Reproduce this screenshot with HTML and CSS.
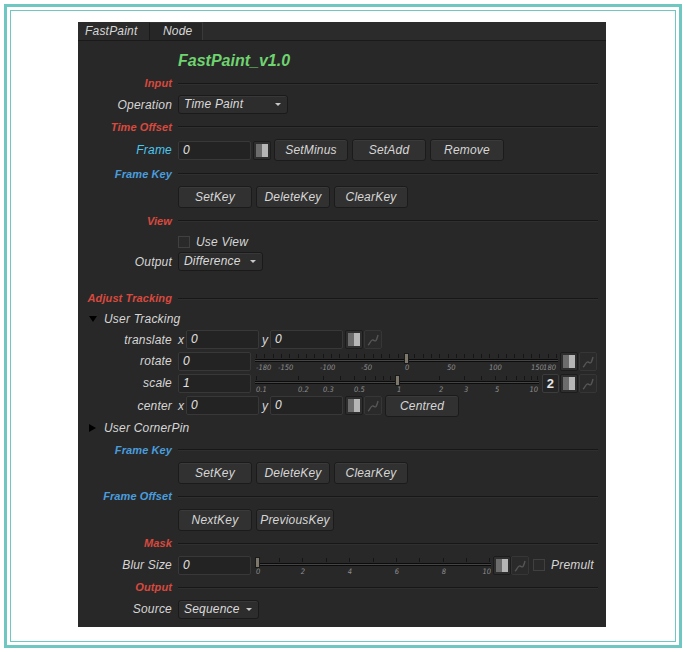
FILE: index.html
```html
<!DOCTYPE html>
<html>
<head>
<meta charset="utf-8">
<link rel="stylesheet" href="styles.css">
</head>
<body>
<div class="frame"><div class="frame-inner">
<div class="panel">
  <div class="tabs">
    <div class="tab active">FastPaint</div>
    <div class="tab node">Node</div>
  </div>
  <div class="body">
    <div class="row h31 top"><div class="lbl"></div><div class="ctl"><span class="title">FastPaint_v1.0</span></div></div>

    <div class="row h22"><div class="lbl hdr red">Input</div><div class="sep"></div></div>
    <div class="row h21"><div class="lbl">Operation</div><div class="ctl"><div class="dd w110">Time Paint</div></div></div>

    <div class="row h23"><div class="lbl hdr red">Time Offset</div><div class="sep"></div></div>
    <div class="row h24"><div class="lbl cyan">Frame</div>
      <div class="ctl">
        <div class="in">0</div>
        <span class="ab ml2"><svg width="16" height="17" viewBox="0 0 16 17"><rect x="2" y="2" width="6" height="13" fill="#6c6c6c"/><rect x="8" y="2" width="6" height="13" fill="#b6b6b6"/></svg></span>
        <div class="btn ml3">SetMinus</div>
        <div class="btn">SetAdd</div>
        <div class="btn">Remove</div>
      </div>
    </div>

    <div class="row h23"><div class="lbl hdr blue">Frame Key</div><div class="sep"></div></div>
    <div class="row h24"><div class="lbl"></div>
      <div class="ctl"><div class="btn first">SetKey</div><div class="btn">DeleteKey</div><div class="btn">ClearKey</div></div>
    </div>

    <div class="row h23"><div class="lbl hdr red">View</div><div class="sep"></div></div>
    <div class="row h19"><div class="lbl"></div><div class="ctl"><span class="cb"></span><span class="cbl">Use View</span></div></div>
    <div class="row h21"><div class="lbl">Output</div><div class="ctl"><div class="dd w85">Difference</div></div></div>

    <div class="h15"></div>

    <div class="row h22"><div class="lbl hdr red">Adjust Tracking</div><div class="sep"></div></div>
    <div class="grp h20"><span class="tri-down"></span><span class="grpl">User Tracking</span></div>

    <div class="row h21"><div class="lbl">translate</div>
      <div class="ctl">
        <span class="ax">x</span><div class="in">0</div>
        <span class="ax ml3">y</span><div class="in">0</div>
        <span class="ab ml2"><svg width="16" height="17" viewBox="0 0 16 17"><rect x="2" y="2" width="6" height="13" fill="#6c6c6c"/><rect x="8" y="2" width="6" height="13" fill="#b6b6b6"/></svg></span>
        <span class="cv ml1"><svg width="16" height="17" viewBox="0 0 16 17"><path d="M3 14 C5 13 6 8 8 9 S11 12 13 4" fill="none" stroke="#555" stroke-width="1.4"/></svg></span>
      </div>
    </div>

    <div class="row h22"><div class="lbl">rotate</div>
      <div class="ctl">
        <div class="in">0</div>
        <svg class="sl ml4" width="303" height="22" viewBox="0 0 303 22" shape-rendering="crispEdges">
          <path d="M1.5 4v4m8.333-4v4m8.333-4v4m8.333-4v4m8.333-4v4m8.333-4v4m8.333-4v4m8.333-4v4m8.333-4v4m8.333-4v4m8.333-4v4m8.333-4v4m8.333-4v4m8.333-4v4m8.333-4v4m8.333-4v4m8.333-4v4m8.333-4v4m8.333-4v4m8.333-4v4m8.333-4v4m8.333-4v4m8.333-4v4m8.333-4v4m8.333-4v4m8.333-4v4m8.333-4v4m8.333-4v4m8.333-4v4m8.333-4v4m8.333-4v4m8.333-4v4m8.333-4v4m8.333-4v4m8.333-4v4m8.333-4v4m8.333-4v4" stroke="#151515" fill="none"/>
          <rect x="0" y="9" width="303" height="1" fill="#0c0c0c"/>
          <rect x="0" y="10" width="303" height="1" fill="#454545"/>
          <rect x="0" y="11" width="303" height="1" fill="#0c0c0c"/>
          <g class="tl">
            <text x="1" y="20">-180</text><text x="23" y="20">-150</text><text x="65" y="20">-100</text><text x="106" y="20">-50</text><text x="150" y="20">0</text><text x="192" y="20">50</text><text x="234" y="20">100</text><text x="276" y="20">150</text><text x="301" y="20" text-anchor="end">180</text>
          </g>
          <rect x="149.5" y="3.5" width="4" height="10" fill="#7e776b" stroke="#1a1a1a"/>
        </svg>
        <span class="ab ml2"><svg width="16" height="17" viewBox="0 0 16 17"><rect x="2" y="2" width="6" height="13" fill="#6c6c6c"/><rect x="8" y="2" width="6" height="13" fill="#b6b6b6"/></svg></span>
        <span class="cv ml1"><svg width="16" height="17" viewBox="0 0 16 17"><path d="M3 14 C5 13 6 8 8 9 S11 12 13 4" fill="none" stroke="#555" stroke-width="1.4"/></svg></span>
      </div>
    </div>

    <div class="row h22"><div class="lbl">scale</div>
      <div class="ctl">
        <div class="in">1</div>
        <svg class="sl ml4" width="284" height="22" viewBox="0 0 284 22" shape-rendering="crispEdges">
          <path d="M1.5 4v4M43.5 4v4M68.5 4v4M85.5 4v4M99.5 4v4M110.5 4v4M120.5 4v4M128.5 4v4M135.5 4v4M142.5 4v4M184.5 4v4M209.5 4v4M226.5 4v4M240.5 4v4M251.5 4v4M261.5 4v4M269.5 4v4M276.5 4v4M282.5 4v4" stroke="#151515" fill="none"/>
          <rect x="0" y="9" width="284" height="1" fill="#0c0c0c"/>
          <rect x="0" y="10" width="284" height="1" fill="#454545"/>
          <rect x="0" y="11" width="284" height="1" fill="#0c0c0c"/>
          <g class="tl">
            <text x="1" y="20">0.1</text><text x="43" y="20">0.2</text><text x="68" y="20">0.3</text><text x="99" y="20">0.5</text><text x="142" y="20">1</text><text x="184" y="20">2</text><text x="209" y="20">3</text><text x="240" y="20">5</text><text x="283" y="20" text-anchor="end">10</text>
          </g>
          <rect x="140.5" y="3.5" width="4" height="10" fill="#7e776b" stroke="#1a1a1a"/>
        </svg>
        <div class="num ml3">2</div>
        <span class="ab ml1"><svg width="16" height="17" viewBox="0 0 16 17"><rect x="2" y="2" width="6" height="13" fill="#6c6c6c"/><rect x="8" y="2" width="6" height="13" fill="#b6b6b6"/></svg></span>
        <span class="cv ml1"><svg width="16" height="17" viewBox="0 0 16 17"><path d="M3 14 C5 13 6 8 8 9 S11 12 13 4" fill="none" stroke="#555" stroke-width="1.4"/></svg></span>
      </div>
    </div>

    <div class="row h23"><div class="lbl">center</div>
      <div class="ctl">
        <span class="ax">x</span><div class="in">0</div>
        <span class="ax ml3">y</span><div class="in">0</div>
        <span class="ab ml2"><svg width="16" height="17" viewBox="0 0 16 17"><rect x="2" y="2" width="6" height="13" fill="#6c6c6c"/><rect x="8" y="2" width="6" height="13" fill="#b6b6b6"/></svg></span>
        <span class="cv ml1"><svg width="16" height="17" viewBox="0 0 16 17"><path d="M3 14 C5 13 6 8 8 9 S11 12 13 4" fill="none" stroke="#555" stroke-width="1.4"/></svg></span>
        <div class="btn ml3">Centred</div>
      </div>
    </div>

    <div class="grp h22"><span class="tri-right"></span><span class="grpl">User CornerPin</span></div>

    <div class="row h21"><div class="lbl hdr blue">Frame Key</div><div class="sep"></div></div>
    <div class="row h25"><div class="lbl"></div>
      <div class="ctl"><div class="btn first">SetKey</div><div class="btn">DeleteKey</div><div class="btn">ClearKey</div></div>
    </div>

    <div class="row h22"><div class="lbl hdr blue">Frame Offset</div><div class="sep"></div></div>
    <div class="row h25"><div class="lbl"></div>
      <div class="ctl"><div class="btn first">NextKey</div><div class="btn w78">PreviousKey</div></div>
    </div>

    <div class="row h22"><div class="lbl hdr red">Mask</div><div class="sep"></div></div>
    <div class="row h22"><div class="lbl">Blur Size</div>
      <div class="ctl">
        <div class="in">0</div>
        <svg class="sl ml4" width="236" height="22" viewBox="0 0 236 22" shape-rendering="crispEdges">
          <path d="M1.5 4v4M24.5 4v4M47.5 4v4M71.5 4v4M94.5 4v4M118.5 4v4M141.5 4v4M164.5 4v4M188.5 4v4M211.5 4v4M234.5 4v4" stroke="#151515" fill="none"/>
          <rect x="0" y="9" width="236" height="1" fill="#0c0c0c"/>
          <rect x="0" y="10" width="236" height="1" fill="#454545"/>
          <rect x="0" y="11" width="236" height="1" fill="#0c0c0c"/>
          <g class="tl">
            <text x="1" y="20">0</text><text x="48" y="20" text-anchor="middle">2</text><text x="95" y="20" text-anchor="middle">4</text><text x="142" y="20" text-anchor="middle">6</text><text x="189" y="20" text-anchor="middle">8</text><text x="236" y="20" text-anchor="end">10</text>
          </g>
          <rect x="0.5" y="3.5" width="4" height="10" fill="#7e776b" stroke="#1a1a1a"/>
        </svg>
        <span class="ab ml2"><svg width="16" height="17" viewBox="0 0 16 17"><rect x="2" y="2" width="6" height="13" fill="#6c6c6c"/><rect x="8" y="2" width="6" height="13" fill="#b6b6b6"/></svg></span>
        <span class="cv"><svg width="16" height="17" viewBox="0 0 16 17"><path d="M3 14 C5 13 6 8 8 9 S11 12 13 4" fill="none" stroke="#555" stroke-width="1.4"/></svg></span>
        <span class="cb ml4"></span><span class="cbl">Premult</span>
      </div>
    </div>

    <div class="row h22"><div class="lbl hdr red">Output</div><div class="sep"></div></div>
    <div class="row h22"><div class="lbl">Source</div><div class="ctl"><div class="dd w81">Sequence</div></div></div>
  </div>
</div>
</div></div>
</body>
</html>
```

FILE: styles.css
```css
html, body {
  margin: 0;
  padding: 0;
  background: #ffffff;
}
body {
  font-family: "Liberation Sans", Arial, sans-serif;
  font-style: italic;
  font-size: 12px;
  letter-spacing: 0.2px;
  color: #d6d6d6;
}
.frame {
  box-sizing: border-box;
  width: 678px;
  height: 644px;
  margin: 4px;
  border: 3px solid #6fc7c1;
  padding: 3px;
}
.frame-inner {
  box-sizing: border-box;
  height: 100%;
  border: 1px solid #6fc7c1;
  padding: 11px 0 0 67px;
}
.panel {
  width: 528px;
  height: 605px;
  background: #282828;
  display: flex;
  flex-direction: column;
}
.tabs {
  height: 18px;
  background: #2b2b2b;
  border-bottom: 1px solid #1a1a1a;
  display: flex;
}
.tab {
  line-height: 18px;
  color: #d6d6d6;
}
.tab.active {
  width: 70px;
  padding-left: 7px;
  box-sizing: border-box;
}
.tab.node {
  box-sizing: border-box;
  width: 54px;
  margin-left: 1px;
  padding-left: 13px;
  background: #262626;
  border-left: 1px solid #1a1a1a;
  border-right: 1px solid #3a3a3a;
  border-top: 1px solid #333;
  line-height: 17px;
  color: #d6d6d6;
}
.body {
  padding-right: 8px;
  display: flex;
  flex-direction: column;
}
.row {
  display: grid;
  grid-template-columns: 94px 1fr;
  column-gap: 6px;
  align-items: center;
}
.row.top { align-items: start; }
.h15 { height: 15px; }
.h19 { height: 19px; }
.h20 { height: 20px; }
.h21 { height: 21px; }
.h22 { height: 22px; }
.h23 { height: 23px; }
.h24 { height: 24px; }
.h25 { height: 25px; }
.h31 { height: 31px; }

.lbl {
  text-align: right;
  white-space: nowrap;
  color: #d6d6d6;
}
.hdr {
  font-weight: bold;
  font-size: 11px;
  letter-spacing: 0.1px;
}
.red { color: #d9493e; }
.blue { color: #4a9ddd; }
.cyan { color: #4cc7ee; }
.sep {
  height: 1px;
  background: #171717;
  box-shadow: 0 1px 0 #2f2f2f;
}
.ctl {
  display: flex;
  align-items: center;
  white-space: nowrap;
}
.title {
  margin-top: 11px;
  font-weight: bold;
  font-size: 16px;
  line-height: 18px;
  letter-spacing: 0;
  color: #6fd46f;
}
.dd {
  position: relative;
  box-sizing: border-box;
  height: 19px;
  line-height: 17px;
  padding-left: 5px;
  background: #2d2d2d;
  border: 1px solid #1a1a1a;
  border-radius: 3px;
  box-shadow: inset 0 1px 0 #383838;
  color: #dadada;
}
.dd::after {
  content: "";
  position: absolute;
  right: 6px;
  top: 7px;
  border-left: 3px solid transparent;
  border-right: 3px solid transparent;
  border-top: 3px solid #c8c8c8;
}
.w110 { width: 110px; }
.w85 { width: 85px; }
.w81 { width: 81px; }
.in {
  box-sizing: border-box;
  width: 73px;
  height: 19px;
  line-height: 17px;
  padding-left: 4px;
  background: #232323;
  border: 1px solid #383838;
  border-radius: 2px;
  color: #e2e2e2;
}
.btn {
  box-sizing: border-box;
  width: 74px;
  height: 22px;
  line-height: 20px;
  margin-left: 4px;
  text-align: center;
  background: #313131;
  border: 1px solid #1b1b1b;
  border-radius: 3px;
  box-shadow: inset 0 1px 0 #3a3a3a;
  color: #d6d6d6;
}
.btn.first { margin-left: 0; }
.btn.w78 { width: 78px; }
.ml1 { margin-left: 1px; }
.ml2 { margin-left: 2px; }
.ml3 { margin-left: 3px; }
.ml4 { margin-left: 4px; }
.btn.ml3 { margin-left: 3px; }
.ab, .cv {
  box-sizing: border-box;
  width: 18px;
  height: 19px;
  display: flex;
  align-items: center;
  justify-content: center;
  border-radius: 2px;
}
.ab {
  background: #2e2e2e;
  border: 1px solid #1c1c1c;
}
.cv {
  background: #2a2a2a;
  border: 1px solid #363636;
}
.ab svg, .cv svg { display: block; }
.ax {
  width: 8px;
  color: #d6d6d6;
}
.sl {
  display: block;
  flex: none;
}
.tl text {
  font-family: "Liberation Sans Narrow", "DejaVu Sans Condensed", "Liberation Sans", sans-serif;
  font-style: italic;
  font-size: 7.5px;
  letter-spacing: 0;
  fill: #8e8e8e;
}
.num {
  box-sizing: border-box;
  width: 17px;
  height: 19px;
  line-height: 17px;
  text-align: center;
  background: #242424;
  border: 1px solid #3c3c3c;
  border-radius: 2px;
  font-style: normal;
  font-weight: bold;
  font-size: 13px;
  color: #e6e6e6;
}
.cb {
  box-sizing: border-box;
  width: 12px;
  height: 12px;
  background: #2a2a2a;
  border: 1px solid #404040;
  flex: none;
}
.cbl {
  margin-left: 6px;
  color: #d6d6d6;
}
.grp {
  display: flex;
  align-items: center;
  padding-left: 11px;
}
.tri-down {
  width: 0;
  height: 0;
  border-left: 4px solid transparent;
  border-right: 4px solid transparent;
  border-top: 6px solid #000;
}
.tri-right {
  width: 0;
  height: 0;
  border-top: 4px solid transparent;
  border-bottom: 4px solid transparent;
  border-left: 7px solid #000;
}
.grpl {
  margin-left: 7px;
  color: #d6d6d6;
}
.tri-right + .grpl { margin-left: 8px; }
```
